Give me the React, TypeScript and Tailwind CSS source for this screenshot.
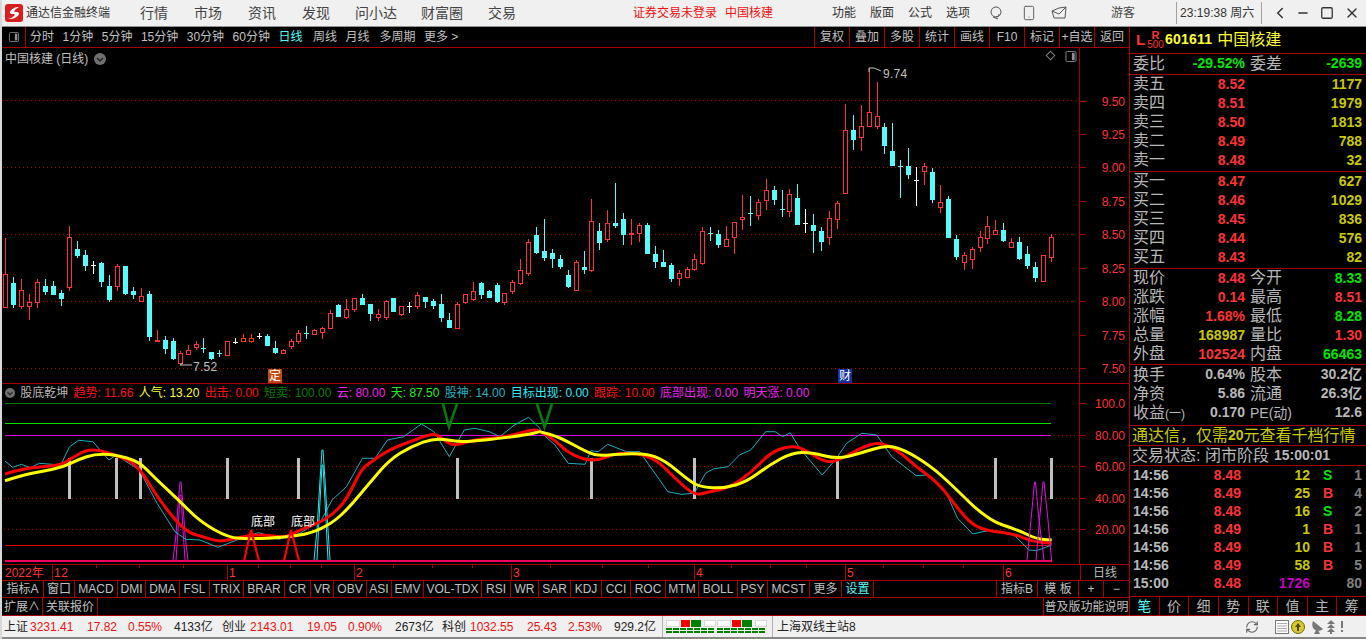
import type { ReactNode } from "react";
import { ChevronLeft, Minus, RefreshCw, Smartphone, Square, X } from "lucide-react";

const RED = "#ff3232";
const LINE = "#a80000";

type C = [number, number, number, number, number, string];

// candle rows: x, high, body top, body bottom, low, colour, read off 3x crops
const s1: C[] = [[16,85,193,290,293,"r"],[40,202,220,281,293,"c"],[64,208,241,287,296,"r"],[88,252,277,287,329,"r"],[112,208,217,277,293,"r"],[136,208,229,243,254,"c"],[160,214,229,252,252,"c"],[184,241,250,263,287,"c"],[208,48,82,232,243,"r"],[232,94,118,134,143,"c"],[256,121,136,164,183,"c"],[280,154,166,168,192,"w"],[304,157,160,212,230,"c"],[328,196,229,266,275,"c"],[352,163,169,229,242,"r"],[376,168,168,250,254,"c"],[400,232,244,251,267,"c"],[424,235,257,274,274,"r"],[448,244,253,377,392,"c"],[472,361,391,394,395,"r"],[496,379,391,413,431,"c"],[520,385,394,443,449,"c"],[541,424,430,458,458,"r"],[565,406,421,433,433,"r"],[589,394,403,410,419,"r"],[610,385,415,418,428,"c"],[634,427,427,443,449,"c"],[658,421,430,431,442,"c"],[682,394,394,434,437,"r"],[706,385,397,398,403,"w"],[730,373,385,394,394,"r"],[754,373,385,394,400,"r"],[778,370,379,380,388,"w"],[802,373,379,404,404,"c"],[826,394,415,425,431,"c"],[850,418,421,430,430,"r"],[874,388,394,409,418,"r"],[895,361,370,394,403,"r"],[919,349,370,371,388,"c"],[943,358,361,373,376,"r"],[967,352,355,367,388,"r"],[991,301,310,355,355,"r"],[1015,283,286,319,319,"c"],[1039,268,298,322,328,"r"],[1063,265,265,298,307,"r"],[1087,253,265,281,284,"c"],[1111,283,283,310,332,"c"],[1135,298,313,322,334,"r"],[1159,271,274,322,331,"r"],[1180,265,265,304,307,"c"]];
const s2: C[] = [[4,408,408,433,437,"r"],[28,397,409,410,428,"w"],[52,367,376,409,418,"r"],[76,381,381,392,413,"c"],[100,388,394,406,418,"c"],[124,373,403,440,455,"c"],[148,430,451,472,472,"c"],[172,397,403,475,478,"r"],[196,373,373,397,403,"r"],[220,337,364,388,394,"r"],[244,337,340,373,386,"c"],[268,361,364,380,385,"c"],[292,340,346,394,400,"c"],[313,370,370,397,406,"r"],[337,331,337,364,373,"r"],[361,268,301,340,346,"r"],[385,208,217,310,319,"r"],[409,172,196,247,253,"c"],[433,148,244,262,274,"c"],[457,238,250,265,295,"c"],[481,256,268,289,298,"c"],[505,301,316,349,355,"c"],[529,271,277,361,361,"r"],[553,244,292,298,313,"c"],[574,88,154,301,307,"r"],[598,160,184,217,241,"c"],[622,121,160,208,217,"r"],[646,40,160,166,175,"c"],[670,130,148,193,226,"c"],[694,148,190,192,226,"r"],[718,160,166,190,217,"r"],[742,160,166,250,250,"c"],[766,229,253,274,295,"c"],[790,241,277,289,289,"c"],[814,280,286,325,337,"c"],[838,301,310,325,349,"r"],[862,290,298,322,322,"r"],[883,253,268,298,302,"r"],[907,172,184,280,284,"r"],[931,172,190,193,214,"c"],[955,181,193,223,235,"c"],[979,169,208,229,229,"r"],[1003,157,157,202,253,"r"],[1027,76,142,148,181,"r"],[1051,79,130,133,169,"c"],[1075,88,97,136,151,"r"],[1099,28,61,91,121,"r"],[1123,49,61,88,106,"c"],[1147,61,118,121,142,"c"],[1168,58,73,124,142,"r"],[1192,43,85,163,163,"c"]];
const s3: C[] = [[76,448,490,491,518,"w"],[100,463,496,510,578,"c"],[124,502,514,542,572,"c"],[148,454,475,532,556,"r"],[172,424,430,478,508,"r"],[196,133,211,399,401,"r"],[220,166,211,238,269,"c"],[244,136,199,230,272,"r"],[268,25,157,199,199,"r"],[292,67,169,199,208,"r"],[313,190,202,256,281,"c"],[337,190,274,316,319,"c"],[361,301,319,320,415,"c"],[385,265,319,343,358,"c"],[409,322,360,361,437,"w"],[433,310,319,334,376,"r"],[457,325,337,418,428,"c"],[481,376,427,442,460,"r"],[505,409,418,532,532,"c"],[529,526,538,589,601,"c"],[553,577,586,607,631,"r"],[577,562,568,598,628,"r"],[601,514,532,562,577,"r"],[622,469,499,535,553,"r"],[646,481,511,523,523,"r"],[670,490,511,541,547,"c"],[694,535,547,562,562,"r"],[718,532,547,595,601,"c"],[742,559,583,616,628,"c"],[766,607,622,652,667,"c"],[790,586,586,664,664,"r"],[814,523,532,592,607,"r"]];

const toAbs = (rows: C[], ox: number, oy: number) =>
  rows.map(([x, h, t, b, l, c]) => ({
    x: Math.round(ox + x / 3) + 0.5,
    h: Math.round(oy + h / 3),
    t: Math.round(oy + t / 3),
    b: Math.round(oy + b / 3),
    l: Math.round(oy + l / 3),
    c,
  }));
const candles = [...toAbs(s1, 0, 210), ...toAbs(s2, 400, 170), ...toAbs(s3, 780, 60)];

const z7 = (p: number[]) => {
  const out: [number, number][] = [];
  for (let i = 0; i < p.length; i += 2) out.push([p[i] / 2.8, 360 + p[i + 1] / 3]);
  return out;
};
const z11 = (p: number[]) => {
  const out: [number, number][] = [];
  for (let i = 0; i < p.length; i += 2) out.push([540 + p[i] / 2.658, 385 + p[i + 1] / 3]);
  return out;
};
const flat = (pts: [number, number][]) => pts.map(([x, y]) => `${x.toFixed(1)},${y.toFixed(1)}`).join(" ");
// rounds the read-off points into a curve through their midpoints
const smooth = (pts: [number, number][]) => {
  let d = `M${pts[0][0].toFixed(1)} ${pts[0][1].toFixed(1)}`;
  for (let i = 1; i < pts.length - 1; i++) {
    const mx = (pts[i][0] + pts[i + 1][0]) / 2;
    const my = (pts[i][1] + pts[i + 1][1]) / 2;
    d += ` Q${pts[i][0].toFixed(1)} ${pts[i][1].toFixed(1)} ${mx.toFixed(1)} ${my.toFixed(1)}`;
  }
  const last = pts[pts.length - 1];
  return `${d} L${last[0].toFixed(1)} ${last[1].toFixed(1)}`;
};

const redLine = smooth([...z7([14,342,60,328,100,322,170,315,200,295,240,270,280,270,320,285,370,305,400,340,440,410,490,480,530,520,570,530,610,545,650,538,700,525,740,525,800,533,840,510,890,490,930,465,970,420,1010,330,1040,305,1090,268,1150,245,1215,218,1240,238,1270,258,1310,245,1350,237,1400,233,1450,222,1490,208,1512,213]), ...z11([0,140,40,165,70,200,120,225,160,225,200,205,260,205,310,225,350,270,410,333,450,320,500,310,560,265,610,205,660,182,700,190,760,235,800,222,850,190,900,170,950,195,1000,245,1060,295,1110,370,1150,420,1190,437,1260,447,1310,470,1360,475])]);
const yellowLine = smooth([...z7([14,362,60,347,120,333,175,322,220,298,265,282,320,283,390,305,430,350,500,420,560,485,640,533,700,537,800,532,870,520,930,490,980,440,1030,375,1090,300,1150,260,1220,233,1280,246,1330,243,1400,235,1470,225,1512,216]), ...z11([0,140,50,155,130,205,160,212,210,208,280,205,330,225,400,290,430,307,490,310,550,290,610,240,670,203,720,202,790,222,850,205,920,180,970,195,1040,245,1090,295,1190,405,1270,435,1320,462,1360,465])]);
const tealLine = flat([...z7([14,303,35,322,60,313,85,323,110,310,170,315,195,260,220,241,260,245,305,300,325,285,390,330,440,430,490,515,520,538,560,540,610,562,700,525,725,518,780,538,840,520,900,480,930,420,970,380,1015,295,1050,295,1085,240,1130,230,1180,192,1215,215,1258,290,1300,210,1330,205,1370,215,1400,230,1440,195,1480,172,1512,205]), ...z11([0,140,40,180,75,235,120,238,135,197,155,200,180,178,230,200,265,200,340,320,375,328,410,325,440,265,460,252,500,245,530,210,560,195,600,140,625,140,645,155,665,143,690,190,750,270,785,225,815,175,855,145,895,150,935,215,1000,272,1030,270,1080,325,1110,400,1150,447,1190,437,1260,450,1300,495,1320,497,1360,480])]);

const dottedMain = [100.5, 167.5, 234.5, 301.5, 368.5];
const mainTicks: [number, string][] = [[101,"9.50"],[134,"9.25"],[167,"9.00"],[201,"8.75"],[234,"8.50"],[268,"8.25"],[301,"8.00"],[335,"7.75"],[368,"7.50"]];
const oscTicks: [number, string][] = [[403,"100.0"],[435,"80.00"],[466,"60.00"],[498,"40.00"],[529,"20.00"]];
const greyBars = [69, 116, 140, 227, 298, 457, 591, 694, 837, 995, 1051];

const MainChart = () => (
  <svg viewBox="2 48 1127 335" width={1127} height={335} className="block">
    {dottedMain.map((y) => (
      <line key={y} x1={3} x2={1079} y1={y} y2={y} stroke="#b00000" strokeDasharray="1 3" shapeRendering="crispEdges" />
    ))}
    <rect x={1079} y={48} width={1} height={335} fill={LINE} />
    {mainTicks.map(([y, t]) => (
      <g key={t}>
        <line x1={1080} x2={1086} y1={y + 0.5} y2={y + 0.5} stroke={LINE} shapeRendering="crispEdges" />
        <text x={1125} y={y + 5} textAnchor="end" fontSize={12} fill={RED}>{t}</text>
      </g>
    ))}
    <g shapeRendering="crispEdges">
      {candles.map((k, i) => {
        const col = k.c === "r" ? RED : k.c === "c" ? "#54fcfc" : "#ffffff";
        const doji = k.b - k.t <= 1;
        return (
          <g key={i} stroke={col}>
            <line x1={k.x} x2={k.x} y1={k.h} y2={k.t} />
            <line x1={k.x} x2={k.x} y1={k.b} y2={k.l} />
            {doji ? (
              <rect x={k.x - 2.5} y={k.t} width={5} height={k.c === "r" ? 2 : 1} fill={col} stroke="none" />
            ) : k.c === "r" ? (
              <rect x={k.x - 2} y={k.t + 0.5} width={4} height={k.b - k.t} fill="#000" />
            ) : (
              <rect x={k.x - 2.5} y={k.t} width={5} height={k.b - k.t + 1} fill={col} stroke="none" />
            )}
          </g>
        );
      })}
    </g>
    <polyline points="869,72 869,68 874,68 881,71" fill="none" stroke="#c0c0c0" />
    <text x={883} y={78} fontSize={12} fill="#c0c0c0" letterSpacing={0.3}>9.74</text>
    <polyline points="183,363 180,365 192,365" fill="none" stroke="#c0c0c0" />
    <text x={193} y={371} fontSize={12} fill="#c0c0c0" letterSpacing={0.3}>7.52</text>
  </svg>
);

const Osc = () => (
  <svg viewBox="2 384 1127 180" width={1127} height={180} className="block">
    {[466.5, 498.5, 529.5].map((y) => (
      <line key={y} x1={4} x2={1079} y1={y} y2={y} stroke="#b00000" strokeDasharray="1 3" shapeRendering="crispEdges" />
    ))}
    <line x1={1054} x2={1079} y1={435.5} y2={435.5} stroke="#b00000" strokeDasharray="1 3" shapeRendering="crispEdges" />
    <g shapeRendering="crispEdges">
      <line x1={5} x2={1051} y1={403.5} y2={403.5} stroke="#008000" />
      <line x1={5} x2={1051} y1={423.5} y2={423.5} stroke="#00e000" />
      <line x1={5} x2={1051} y1={435.5} y2={435.5} stroke="#e000e0" />
      <line x1={5} x2={1051} y1={545.5} y2={545.5} stroke="#e00000" />
      {greyBars.map((x) => (
        <rect key={x} x={x - 1} y={458} width={3} height={41} fill="#c0c0c0" />
      ))}
    </g>
    <polyline points="443,404 449,427 457,404" fill="none" stroke="#087808" strokeWidth={2.6} />
    <polyline points="537,404 544.5,427 552,404" fill="none" stroke="#087808" strokeWidth={2.6} />
    <polyline points="173,560 176,535 178,505 180,482 181,482 183,505 185,535 188,560" fill="none" stroke="#e010e0" />
    <polyline points="176,560 178,530 180,495 181,495 183,530 185,560" fill="none" stroke="#e010e0" />
    <polyline points={tealLine} fill="none" stroke="#18b0c0" />
    <polyline points="314,560 317,530 320,480 322,450 323,450 325,480 328,530 330,560" fill="none" stroke="#20e8f0" />
    <polyline points="317,560 319,520 322,465 323,465 326,520 328,560" fill="none" stroke="#20e8f0" />
    <path d={redLine} fill="none" stroke="#ff0000" strokeWidth={3} />
    <path d={yellowLine} fill="none" stroke="#ffff00" strokeWidth={3} />
    <polyline points="244,561 251,530 259,561" fill="none" stroke="#ff0000" strokeWidth={2.2} />
    <polyline points="284,561 291,530 299,561" fill="none" stroke="#ff0000" strokeWidth={2.2} />
    <polyline points="1027,560 1031,520 1034.5,482 1035.5,482 1039,520 1044,560" fill="none" stroke="#e010e0" />
    <polyline points="1036,560 1039.5,520 1043,482 1044,482 1048,520 1051.5,560" fill="none" stroke="#e010e0" />
    <rect x={5} y={560} width={1047} height={2} fill="#f00060" />
    <text x={251} y={526} fontSize={12} fill="#fff" fontFamily="'Noto Sans CJK SC'">底部</text>
    <text x={291} y={526} fontSize={12} fill="#fff" fontFamily="'Noto Sans CJK SC'">底部</text>
    <rect x={1079} y={384} width={1} height={180} fill={LINE} />
    {oscTicks.map(([y, t]) => (
      <g key={t}>
        <line x1={1080} x2={1086} y1={y + 0.5} y2={y + 0.5} stroke={LINE} shapeRendering="crispEdges" />
        <text x={1125} y={y + 5} textAnchor="end" fontSize={12} fill={RED}>{t}</text>
      </g>
    ))}
  </svg>
);

const TimeAxis = () => (
  <svg viewBox="52 564 1028 15" width={1028} height={15} className="block">
    {[96,139,183,258,290,321,393,432,472,550,602,648,731,770,806,883,923,963].map((x) => (
      <line key={x} x1={x + 0.5} x2={x + 0.5} y1={564} y2={567} stroke={LINE} shapeRendering="crispEdges" />
    ))}
    {([[52,"12"],[227,"1"],[354,"2"],[511,"3"],[694,"4"],[845,"5"],[1003,"6"]] as [number, string][]).map(([x, t]) => (
      <g key={t}>
        <line x1={x + 0.5} x2={x + 0.5} y1={564} y2={579} stroke={LINE} shapeRendering="crispEdges" />
        <text x={x + 2} y={576} fontSize={12} fill={RED} letterSpacing={0.5}>{t}</text>
      </g>
    ))}
  </svg>
);

const legend: [string, string][] = [
  ["趋势: 11.66", "text-[#ff1010]"],
  ["人气: 13.20", "text-[#ffff30]"],
  ["出击: 0.00", "text-[#ff1010]"],
  ["短卖: 100.00", "text-[#008000]"],
  ["云: 80.00", "text-[#f020f0]"],
  ["天: 87.50", "text-[#20f020]"],
  ["股神: 14.00", "text-[#20b0c0]"],
  ["目标出现: 0.00", "text-[#30e8f8]"],
  ["跟踪: 10.00", "text-[#ff1010]"],
  ["底部出现: 0.00", "text-[#f020f0]"],
  ["明天涨: 0.00", "text-[#f020f0]"],
];

const tabs: [string, string][] = [
  ["指标A", "w-[42px]"], ["窗口", "w-[31px]"], ["MACD", "w-[43px]"], ["DMI", "w-[28px]"], ["DMA", "w-[34px]"],
  ["FSL", "w-[30px]"], ["TRIX", "w-[34px]"], ["BRAR", "w-[41px]"], ["CR", "w-[26px]"], ["VR", "w-[23px]"],
  ["OBV", "w-[33px]"], ["ASI", "w-[25px]"], ["EMV", "w-[32px]"], ["VOL-TDX", "w-[58px]"], ["RSI", "w-[29px]"],
  ["WR", "w-[28px]"], ["SAR", "w-[32px]"], ["KDJ", "w-[31px]"], ["CCI", "w-[29px]"], ["ROC", "w-[35px]"],
  ["MTM", "w-[33px]"], ["BOLL", "w-[39px]"], ["PSY", "w-[30px]"], ["MCST", "w-[42px]"], ["更多", "w-[32px]"],
];

const GrayDot = ({ className }: { className: string }) => (
  <svg viewBox="0 0 12 12" className={className}>
    <circle cx="6" cy="6" r="6" fill="#707070" />
    <polyline points="3,5 6,8 9,5" fill="none" stroke="#222" strokeWidth="1.5" />
  </svg>
);

const PanelIcon = ({ className }: { className: string }) => (
  <svg viewBox="0 0 12 12" className={className}>
    <rect x="0.5" y="0.5" width="11" height="11" rx="1.5" fill="none" stroke="#909090" />
    <rect x="7" y="2" width="3" height="8" fill="#909090" />
  </svg>
);

const Logo = () => (
  <svg viewBox="0 0 18 18" className="w-[18px] h-[18px] shrink-0">
    <rect width="18" height="18" rx="3" fill="#d81e1e" />
    <path d="M14 3 C10 3 6 5 5 8 C4.5 10 7 10 9 10 C10 10 10 11 9 12 C7.5 13.5 5 14.5 3 15 C8 15.5 13 13 14 10 C14.5 8 12 8 10 8 C9 8 9 7 10 6 C11 5 12.5 4 14 3 Z" fill="#fff" />
  </svg>
);

const TitleBar = () => (
  <div className="flex items-center h-[27px] bg-[#f0f0f0] border-b border-[#909090] text-[#444]">
    <div className="ml-[3px]"><Logo /></div>
    <span className="ml-[3px] w-[84px] text-[12px] text-[#333]">通达信金融终端</span>
    <div className="ml-[30px] flex gap-[24px] text-[14px]">
      <span className="mr-[2px]">行情</span>
      <span className="mr-[2px]">市场</span>
      <span className="mr-[2px]">资讯</span>
      <span className="mr-[1px]">发现</span>
      <span>问小达</span>
      <span className="mr-[1px]">财富圈</span>
      <span>交易</span>
    </div>
    <span className="ml-[117px] text-[12px] text-[#f01010]">证券交易未登录</span>
    <span className="ml-[8px] text-[12px] text-[#f01010]">中国核建</span>
    <div className="ml-[59px] flex gap-[14px] text-[12px] text-[#333]">
      <span>功能</span><span>版面</span><span>公式</span><span>选项</span>
    </div>
    <svg viewBox="0 0 14 14" className="ml-[19px] w-[14px] h-[14px]" fill="none" stroke="#555">
      <circle cx="7" cy="6" r="5" />
      <path d="M4 11 L9 13 M7 11 C9 11 10 9 10 8" />
    </svg>
    <Smartphone className="ml-[18px] w-[16px] h-[16px]" strokeWidth={1.4} color="#555" />
    <svg viewBox="0 0 16 14" className="ml-[14px] w-[16px] h-[14px]" fill="none" stroke="#555">
      <path d="M1 5 L8 2 L15 1 L14 12 L3 12 Z M1 5 L8 8 L15 1" />
    </svg>
    <span className="ml-[44px] text-[12px] text-[#444]">游客</span>
    <div className="ml-[41px] h-[22px] border-l border-[#a0a0a0]" />
    <span className="ml-[3px] w-[81px] text-[12px] text-[#333] whitespace-nowrap">23:19:38 周六</span>
    <div className="h-[22px] border-l border-[#a0a0a0]" />
    <ChevronLeft className="ml-[9px] w-[18px] h-[18px]" strokeWidth={2} color="#333" />
    <Minus className="ml-[7px] w-[14px] h-[14px]" strokeWidth={2.5} color="#333" />
    <Square className="ml-[10px] w-[14px] h-[14px]" strokeWidth={2.2} color="#333" />
    <X className="ml-[10px] w-[16px] h-[16px]" strokeWidth={2} color="#333" />
  </div>
);

const Toolbar = () => (
  <div className="flex h-[21px] border-b border-[#a80000] text-[12px] text-[#c0c0c0]">
    <div className="flex items-center justify-center w-[24px] border-r border-[#a80000]">
      <PanelIcon className="w-[12px] h-[10px]" />
    </div>
    <div className="ml-[4px] flex items-center gap-[8.5px]">
      <span>分时</span><span>1分钟</span><span>5分钟</span><span>15分钟</span><span>30分钟</span><span>60分钟</span>
      <span className="text-[#54fcfc]">日线</span>
      <span className="ml-[2px]">周线</span>
      <span>月线</span>
      <span className="ml-[1.5px]">多周期</span>
      <span>更多 &gt;</span>
    </div>
    <div className="ml-auto flex">
      {["复权", "叠加", "多股", "统计", "画线", "F10", "标记", "+自选", "返回"].map((t) => (
        <div key={t} className="flex items-center justify-center w-[35px] border-l border-[#a80000] whitespace-nowrap">{t}</div>
      ))}
    </div>
  </div>
);

const StatusBars = () => (
  <div className="flex flex-col w-[50px] gap-[1px]">
    <div className="flex h-[7px]">
      <div className="w-[14px] border border-[#d8d8d8] bg-white" />
      <div className="w-[9px] ml-[1px] bg-[#f00000]" />
      <div className="w-[10px] ml-[1px] bg-[#008000]" />
      <div className="w-[12px] ml-[3px] border border-[#d8d8d8] bg-white" />
    </div>
    <div className="flex gap-[1px]">
      {[0, 1, 2, 3, 4, 5, 6].map((i) => (
        <div key={i} className="w-[6px] h-[5px] border-y-2 border-[#008000]" />
      ))}
    </div>
  </div>
);

const statusItems: [string, string, string][] = [
  ["上证", "w-[26px]", "text-[#222]"], ["3231.41", "w-[57px]", "text-[#f01010]"], ["17.82", "w-[41px]", "text-[#f01010]"],
  ["0.55%", "w-[46px]", "text-[#f01010]"], ["4133亿", "w-[48px]", "text-[#222]"], ["创业", "w-[28px]", "text-[#222]"],
  ["2143.01", "w-[57px]", "text-[#f01010]"], ["19.05", "w-[41px]", "text-[#f01010]"], ["0.90%", "w-[47px]", "text-[#f01010]"],
  ["2673亿", "w-[47px]", "text-[#222]"], ["科创", "w-[28px]", "text-[#222]"], ["1032.55", "w-[57px]", "text-[#f01010]"],
  ["25.43", "w-[41px]", "text-[#f01010]"], ["2.53%", "w-[46px]", "text-[#f01010]"], ["929.2亿", "w-[48px]", "text-[#222]"],
];

const StatusBar = () => (
  <div className="flex items-center h-[21px] bg-[#f0f0f0] text-[12px] pl-[2px]">
    {statusItems.map(([t, w, c]) => (
      <span key={t} className={`${w} ${c} whitespace-nowrap`}>{t}</span>
    ))}
    <div className="h-full border-l border-[#b0b0b0]" />
    <div className="ml-[3px] w-[51px]"><StatusBars /></div>
    <div className="w-[51px]"><StatusBars /></div>
    <div className="ml-[4px] h-full border-l border-[#b0b0b0]" />
    <span className="ml-[4px] w-[80px] text-[#222] whitespace-nowrap">上海双线主站8</span>
    <RefreshCw className="ml-[388px] w-[14px] h-[14px]" color="#666" strokeWidth={2} />
    <svg viewBox="0 0 14 14" className="ml-[16px] w-[14px] h-[14px]">
      <rect x="0.5" y="0.5" width="13" height="13" fill="#fff" stroke="#777" />
      <path d="M2 3.5H12M2 6H12M2 8.5H12M2 11H12" stroke="#aaa" />
    </svg>
    <svg viewBox="0 0 14 14" className="ml-[2px] w-[14px] h-[14px]">
      <circle cx="7" cy="7" r="6.5" fill="#d8c830" stroke="#706800" />
      <path d="M7 3 L10 7 H8 V11 H6 V7 H4 Z" fill="#504800" />
    </svg>
    <svg viewBox="0 0 14 14" className="ml-[5px] w-[14px] h-[14px]" fill="#777">
      <path d="M3 1 L13 9 C10 12 5 11 3 8 C2 6 2 3 3 1 Z" />
      <path d="M6 10 L4 14 H10 L8 10 Z" />
    </svg>
    <svg viewBox="0 0 10 14" className="ml-[2px] w-[10px] h-[14px]" fill="#777">
      <path d="M5 0 L9 4 H1 Z M5 4 L9 8 H1 Z M5 8 L9 12 H1 Z" />
      <rect x="4" y="12" width="2" height="2" />
    </svg>
    <svg viewBox="0 0 4 12" className="ml-[4px] w-[4px] h-[12px]" fill="#777">
      <rect x="1" y="0" width="2" height="7" />
      <rect x="1" y="9" width="2" height="2" />
    </svg>
  </div>
);

type Tone = "r" | "g" | "y" | "w";
const tones: Record<Tone, string> = {
  r: "text-[#ff3232]",
  g: "text-[#00e600]",
  y: "text-[#c8c800]",
  w: "text-[#b8b8b8]",
};

const Row = (p: { a: ReactNode; av: string; at: Tone; b: ReactNode; bv: string; bt: Tone }) => (
  <div className="flex items-center h-[19px] pl-[3px]">
    <span className="w-[40px] text-[16px] text-[#b8b8b8] whitespace-nowrap">{p.a}</span>
    <span className={`w-[72px] text-right text-[14px] font-bold ${tones[p.at]}`}>{p.av}</span>
    <span className="ml-[5px] w-[40px] text-[16px] text-[#b8b8b8] whitespace-nowrap">{p.b}</span>
    <span className={`w-[72px] text-right text-[14px] font-bold whitespace-nowrap ${tones[p.bt]}`}>{p.bv}</span>
  </div>
);

const BookRow = ({ a, price, qty }: { a: string; price: string; qty: string }) => (
  <div className="flex items-center h-[19px] pl-[3px]">
    <span className="w-[32px] text-[16px] text-[#b8b8b8]">{a}</span>
    <span className="w-[80px] text-right text-[14px] font-bold text-[#ff3232]">{price}</span>
    <span className="w-[117px] text-right text-[14px] font-bold text-[#c8c800]">{qty}</span>
  </div>
);

const ticks: [string, string, string, string, string, string][] = [
  ["14:56", "8.48", "12", "S", "1", "text-[#c8c800]"],
  ["14:56", "8.49", "25", "B", "4", "text-[#c8c800]"],
  ["14:56", "8.48", "16", "S", "2", "text-[#c8c800]"],
  ["14:56", "8.49", "1", "B", "1", "text-[#c8c800]"],
  ["14:56", "8.49", "10", "B", "1", "text-[#c8c800]"],
  ["14:56", "8.49", "58", "B", "5", "text-[#c8c800]"],
  ["15:00", "8.48", "1726", "", "80", "text-[#c000c0]"],
];

const SidePanel = () => (
  <aside className="flex flex-col flex-1 text-[#b8b8b8]">
    <div className="flex items-center h-[27px] border-b border-[#a80000] pl-[6px]">
      <span className="text-[15px] font-bold text-[#ff3232] w-[12px]">L</span>
      <div className="flex flex-col items-center w-[15px] leading-[10px] text-[#ff3232]">
        <span className="text-[11px] font-bold">R</span>
        <span className="text-[10px]">500</span>
      </div>
      <span className="ml-[2px] text-[14px] font-bold text-[#ffff30] tracking-[0.2px]">601611</span>
      <span className="ml-[5px] text-[16px] text-[#ffff30]">中国核建</span>
    </div>
    <div className="flex items-center h-[21px] border-b border-[#a80000]">
      <Row a="委比" av="-29.52%" at="g" b="委差" bv="-2639" bt="g" />
    </div>
    <div className="h-[97px] border-b border-[#a80000]">
      <BookRow a="卖五" price="8.52" qty="1177" />
      <BookRow a="卖四" price="8.51" qty="1979" />
      <BookRow a="卖三" price="8.50" qty="1813" />
      <BookRow a="卖二" price="8.49" qty="788" />
      <BookRow a="卖一" price="8.48" qty="32" />
    </div>
    <div className="h-[97px] border-b border-[#a80000]">
      <BookRow a="买一" price="8.47" qty="627" />
      <BookRow a="买二" price="8.46" qty="1029" />
      <BookRow a="买三" price="8.45" qty="836" />
      <BookRow a="买四" price="8.44" qty="576" />
      <BookRow a="买五" price="8.43" qty="82" />
    </div>
    <div className="h-[97px] border-b border-[#a80000]">
      <Row a="现价" av="8.48" at="r" b="今开" bv="8.33" bt="g" />
      <Row a="涨跌" av="0.14" at="r" b="最高" bv="8.51" bt="r" />
      <Row a="涨幅" av="1.68%" at="r" b="最低" bv="8.28" bt="g" />
      <Row a="总量" av="168987" at="y" b="量比" bv="1.30" bt="r" />
      <Row a="外盘" av="102524" at="r" b="内盘" bv="66463" bt="g" />
    </div>
    <div className="h-[61px] border-b border-[#a80000]">
      <Row a="换手" av="0.64%" at="w" b="股本" bv="30.2亿" bt="w" />
      <Row a="净资" av="5.86" at="w" b="流通" bv="26.3亿" bt="w" />
      <Row a={<>收益<span className="text-[12px]">(一)</span></>} av="0.170" at="w" b={<span className="text-[14px]">PE(动)</span>} bv="12.6" bt="w" />
    </div>
    <div className="flex items-center h-[20px] border-b border-[#a80000] pl-[2px] text-[16px] text-[#c8c800] whitespace-nowrap">
      通达信，仅需<b className="text-[14px]">20</b>元查看千档行情
    </div>
    <div className="flex items-center h-[20px] border-b border-[#a80000] pl-[2px] text-[16px] whitespace-nowrap">
      交易状态: 闭市阶段<b className="ml-[5px] text-[14px]">15:00:01</b>
    </div>
    <div className="h-[131px] border-b border-[#a80000] text-[14px] font-bold">
      {ticks.map(([t, p, v, s, n, c], i) => (
        <div key={i} className="flex items-center h-[18px] pl-[3px]">
          <span className="w-[40px]">{t}</span>
          <span className="w-[68px] text-right text-[#ff3232]">{p}</span>
          <span className={`w-[69px] text-right ${c}`}>{v}</span>
          <span className={`ml-[13px] w-[12px] ${s === "S" ? "text-[#00e600]" : "text-[#ff3232]"}`}>{s}</span>
          <span className="w-[27px] text-right text-[#808080]">{n}</span>
        </div>
      ))}
    </div>
    <div className="flex h-[19px] border-b border-[#a80000] text-[14px]">
      {["笔", "价", "细", "势", "联", "值", "主", "筹"].map((t, i) => (
        <div key={t} className={`flex items-center justify-center flex-1 border-r border-[#a80000] last:border-r-0 ${i === 0 ? "text-[#54fcfc]" : ""}`}>{t}</div>
      ))}
    </div>
  </aside>
);

const App = () => {
  return (
    <div className="w-[1366px] h-[639px] overflow-hidden flex flex-col bg-[#d8d8d8] pl-[2px] font-['Liberation_Sans','Noto_Sans_CJK_SC',sans-serif]">
      <TitleBar />
      <div className="flex h-[589px] bg-black">
        <div className="flex flex-col w-[1128px] border-r border-[#a80000]">
          <Toolbar />
          <div className="relative h-[336px] border-b border-[#a80000]">
            <MainChart />
            <div className="absolute left-[3px] top-[2px] flex items-center gap-[6px] text-[12px] text-[#c0c0c0]">
              <span>中国核建 (日线)</span>
              <GrayDot className="w-[12px] h-[12px]" />
            </div>
            <div className="absolute left-[1045px] top-[4px] w-[7px] h-[7px] rotate-45 border border-[#808080]" />
            <div className="absolute left-[1063px] top-[3px]">
              <PanelIcon className="w-[12px] h-[11px]" />
            </div>
            <div className="absolute left-[266px] top-[321px] flex items-center justify-center w-[14px] h-[14px] bg-[#c04a10] text-white text-[12px]">定</div>
            <div className="absolute left-[836px] top-[321px] flex items-center justify-center w-[14px] h-[14px] bg-[#1030a0] text-white text-[12px]">财</div>
          </div>
          <div className="relative h-[180px]">
            <Osc />
            <div className="absolute left-[3px] top-[1px] flex items-center h-[16px] gap-[5.3px] text-[12px] whitespace-nowrap">
              <GrayDot className="w-[10px] h-[10px]" />
              <span className="text-[#b8b8b8]">股底乾坤</span>
              {legend.map(([t, c]) => (
                <span key={t} className={c}>{t}</span>
              ))}
            </div>
          </div>
          <div className="flex h-[17px] border-y border-[#a80000]">
            <div className="flex items-center w-[50px] pl-[3px] text-[12px] text-[#ff3232]">2022年</div>
            <TimeAxis />
            <div className="flex items-center justify-center w-[49px] border-l border-[#a80000] text-[12px] text-[#b8b8b8]">日线</div>
          </div>
          <div className="flex h-[17px] border-b border-[#a80000] text-[12px] text-[#c0c0c0]">
            {tabs.map(([t, w]) => (
              <div key={t} className={`flex items-center justify-center ${w} border-r border-[#a80000] whitespace-nowrap`}>{t}</div>
            ))}
            <div className="flex items-center justify-center w-[32px] border-r border-[#a80000] text-[#54fcfc]">设置</div>
            <div className="flex-1" />
            <div className="flex items-center justify-center w-[42px] border-x border-[#a80000] whitespace-nowrap">指标B</div>
            <div className="flex items-center justify-center w-[41px] border-r border-[#a80000] whitespace-nowrap">模 板</div>
            <div className="flex items-center justify-center w-[25px] border-r border-[#a80000]">+</div>
            <div className="flex items-center justify-center w-[25px]">−</div>
          </div>
          <div className="flex h-[18px] border-b border-[#a80000] text-[12px] text-[#c0c0c0]">
            <div className="flex items-center justify-center w-[41px] border-r border-[#a80000] whitespace-nowrap">扩展∧</div>
            <div className="flex items-center justify-center w-[55px] border-r border-[#a80000] whitespace-nowrap">关联报价</div>
            <div className="flex-1" />
            <div className="flex items-center justify-center w-[86px] border-l border-[#a80000] whitespace-nowrap">普及版功能说明</div>
          </div>
        </div>
        <SidePanel />
      </div>
      <StatusBar />
      <div className="flex-1 bg-[#888888]" />
    </div>
  );
};

export default App;
